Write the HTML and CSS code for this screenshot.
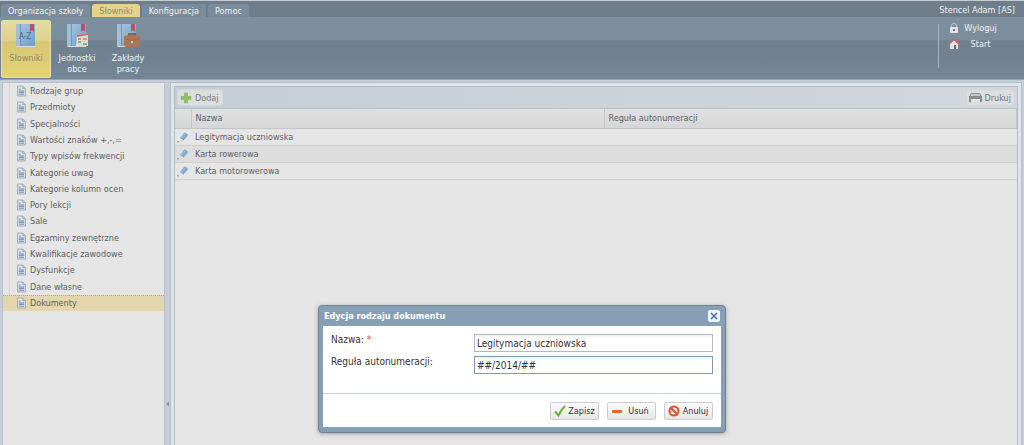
FILE: index.html
```html
<!DOCTYPE html>
<html lang="pl">
<head>
<meta charset="utf-8">
<title>Słowniki</title>
<link rel="stylesheet" href="styles.css">
</head>
<body>
<svg class="defs" aria-hidden="true">
  <defs>
    <linearGradient id="blue" x1="0" y1="0" x2="1" y2="1"><stop offset="0" stop-color="#a9c8e0"/><stop offset="1" stop-color="#6f9cc4"/></linearGradient>
    <symbol id="doc" viewBox="0 0 10 12">
      <path d="M.5.5h6l3 3v8h-9z" fill="#dfe4e9" stroke="#98a6b3"/>
      <path d="M6.500.5v3h3" fill="#bccad8" stroke="#98a6b3"/>
      <path d="M2 4h2M2 6h6M2 7.500h6M2 9.500h6" stroke="#68809a"/>
    </symbol>
    <symbol id="pencil" viewBox="0 0 12 12">
      <path d="M3 7l4-5q1-1 2 0l1.500 1q1 1 0 2L6.500 9.500z" fill="#7da8d2"/>
      <path d="M4.500 7l4-4.500" stroke="#a9c8e4"/>
      <path d="M3 7l3.500 2.500L4 10.500z" fill="#cdd9e4"/>
      <path d="M0 10h2v1.500H0z" fill="#a3a8ad"/>
    </symbol>
    <symbol id="book" viewBox="0 0 24 26">
      <path d="M2 2q0-1 1-1h18v22H3q-1 0-1-1z" fill="url(#blue)"/>
      <path d="M3 1h3v22H3q-1 0-1-1V2q0-1 1-1z" fill="#a3bfd6"/>
      <path d="M6.500 1v22" stroke="#6c95b9"/>
      <path d="M2 23h19v1H3z" fill="#d5dde4"/>
      <path d="M16 1h4v8l-2-2-2 2z" fill="#bd4e68"/>
    </symbol>
  </defs>
</svg>
<header class="top">
  <div class="tabbar">
    <nav class="tabs">
      <a class="tab" href="#">Organizacja szkoły</a>
      <a class="tab tab-on" href="#">Słowniki</a>
      <a class="tab" href="#">Konfiguracja</a>
      <a class="tab" href="#">Pomoc</a>
    </nav>
    <span class="user">Stencel Adam [AS]</span>
  </div>
  <div class="ribbon">
    <div class="tools">
      <button class="tool tool-on"><svg width="24" height="26" viewBox="0 0 24 26"><use href="#book"/><text class="az" x="5" y="16">A-Z</text></svg><span>Słowniki</span></button>
      <button class="tool"><svg width="24" height="26" viewBox="0 0 24 26"><use href="#book"/><path d="M12 12l11-2v13H11z" fill="#dddcd3"/><path d="M12 12l11-2v2l-11 2z" fill="#cc6b66"/><path d="M13 16h3M13 19h3M18 21h4" stroke="#8fae7c" stroke-width="2"/><path d="M18 16h4" stroke="#d98d7e" stroke-width="2"/></svg><span>Jednostki obce</span></button>
      <button class="tool"><svg width="26" height="26" viewBox="0 0 26 26"><use href="#book" width="24" height="26"/><path d="M14 13v-2h6v2" fill="none" stroke="#8d6450" stroke-width="2"/><path d="M9 13q8-2 16 0v9q-1 2-3 2H11q-2 0-2-2z" fill="#a9765a"/><path d="M9 15q8 5 16 0" fill="none" stroke="#98694f"/><circle cx="17" cy="19" r="1" fill="#f1e4d8"/></svg><span>Zakłady pracy</span></button>
    </div>
    <nav class="session">
      <a href="#"><svg width="12" height="12" viewBox="0 0 12 12"><path d="M3.500 6V3.500q0-2 2.500-2t2.500 2V6" fill="none" stroke="#c3cbd2"/><rect x="2" y="5" width="8" height="6" rx="1" fill="#e2e5e8"/><path d="M6 7v2" stroke="#657789" stroke-width="2"/></svg><span>Wyloguj</span></a>
      <a href="#"><svg width="12" height="12" viewBox="0 0 12 12"><path d="M2 6l4-4 4 4v5H2z" fill="#e0e2e3"/><path d="M.5 6.500L6 1.500l5.500 5M9.500 1v3" fill="none" stroke="#c66b74" stroke-width="1.500"/><path d="M6 7h2v4H6z" fill="#7b6670"/></svg><span>Start</span></a>
    </nav>
  </div>
</header>
<main class="work">
  <aside class="side">
    <ul class="tree">
      <li><a href="#"><svg><use href="#doc"/></svg>Rodzaje grup</a></li>
      <li><a href="#"><svg><use href="#doc"/></svg>Przedmioty</a></li>
      <li><a href="#"><svg><use href="#doc"/></svg>Specjalności</a></li>
      <li><a href="#"><svg><use href="#doc"/></svg>Wartości znaków +,-,=</a></li>
      <li><a href="#"><svg><use href="#doc"/></svg>Typy wpisów frekwencji</a></li>
      <li><a href="#"><svg><use href="#doc"/></svg>Kategorie uwag</a></li>
      <li><a href="#"><svg><use href="#doc"/></svg>Kategorie kolumn ocen</a></li>
      <li><a href="#"><svg><use href="#doc"/></svg>Pory lekcji</a></li>
      <li><a href="#"><svg><use href="#doc"/></svg>Sale</a></li>
      <li><a href="#"><svg><use href="#doc"/></svg>Egzaminy zewnętrzne</a></li>
      <li><a href="#"><svg><use href="#doc"/></svg>Kwalifikacje zawodowe</a></li>
      <li><a href="#"><svg><use href="#doc"/></svg>Dysfunkcje</a></li>
      <li><a href="#"><svg><use href="#doc"/></svg>Dane własne</a></li>
      <li class="picked"><a href="#"><svg><use href="#doc"/></svg>Dokumenty</a></li>
    </ul>
  </aside>
  <button class="splitter" aria-label="Zwiń"><svg width="3" height="6" viewBox="0 0 4 6"><path d="M4 0v6L0 3z" fill="#7f8b98"/></svg></button>
  <section class="content">
    <div class="grid">
      <div class="toolbar">
        <button class="mini"><svg width="12" height="12" viewBox="0 0 12 12"><path d="M4.500 1h3v3.500H11v3H7.500V11h-3V7.500H1v-3h3.500z" fill="#8fbe68" stroke="#7cab56" stroke-width=".5"/></svg>Dodaj</button>
        <button class="mini"><svg width="13" height="10" viewBox="0 0 13 10"><path d="M2 .5h9l1 3H1z" fill="#c3c5c8" stroke="#8f949a"/><path d="M0 3h13v6h-2V6H2v3H0z" fill="#868b91"/><path d="M3 6h7v2H3z" fill="#e2e3e4"/></svg>Drukuj</button>
      </div>
      <table>
        <colgroup><col class="c-edit"><col class="c-name"><col></colgroup>
        <thead><tr><th></th><th>Nazwa</th><th>Reguła autonumeracji</th></tr></thead>
        <tbody>
          <tr><td><svg><use href="#pencil"/></svg></td><td>Legitymacja uczniowska</td><td></td></tr>
          <tr><td><svg><use href="#pencil"/></svg></td><td>Karta rowerowa</td><td></td></tr>
          <tr><td><svg><use href="#pencil"/></svg></td><td>Karta motorowerowa</td><td></td></tr>
        </tbody>
      </table>
    </div>
  </section>
</main>
<form class="dialog" role="dialog" aria-labelledby="dlg-title">
  <div class="dlg-head"><h2 id="dlg-title">Edycja rodzaju dokumentu</h2>
    <button type="button" class="close" aria-label="Zamknij"><svg width="12" height="12" viewBox="0 0 12 12"><path d="M3 3l6 6M9 3L3 9" stroke="#4a6db0" stroke-width="1.500"/></svg></button></div>
  <div class="dlg-body">
    <div class="fields">
      <label for="name">Nazwa: <b>*</b></label><input id="name" type="text" value="Legitymacja uczniowska">
      <label for="rule">Reguła autonumeracji:</label><input id="rule" class="focused" type="text" value="##/2014/##">
    </div>
    <div class="actions">
      <button type="button"><svg width="12" height="12" viewBox="0 0 12 12"><path d="M1 6.500L4.500 10.500Q7 5 11 1" fill="none" stroke="#6db33f" stroke-width="2"/></svg><span>Zapisz</span></button>
      <button type="button"><svg width="12" height="12" viewBox="0 0 12 12"><rect x="1" y="5" width="10" height="3" rx="1" fill="#e2672c"/></svg><span>Usuń</span></button>
      <button type="button"><svg width="12" height="12" viewBox="0 0 12 12"><circle cx="6" cy="6" r="4.500" fill="#fbe9e0" stroke="#d65530" stroke-width="2"/><path d="M3 3l6 6" stroke="#d65530" stroke-width="2"/></svg><span>Anuluj</span></button>
    </div>
  </div>
</form>
</body>
</html>
```
FILE: styles.css
```css
* { box-sizing: border-box; }
body {
  margin: 0;
  min-height: 100vh;
  display: flex;
  flex-direction: column;
  background: #c7cfd8;
  color: #5c5e61;
  font: 9px/12px "DejaVu Sans Condensed", Tahoma, sans-serif;
}
button, input { font: inherit; color: inherit; margin: 0; }
button { cursor: pointer; }
a { color: inherit; text-decoration: none; }
svg { flex: none; }
.defs { position: absolute; width: 0; height: 0; }

.top { color: #eef1f3; border-top: 1px solid #c6ccd1; }
.tabbar { display: flex; justify-content: space-between; background: #6e7d8a; height: 16px; padding: 3px 9px 0 1px; }
.tabs { display: flex; gap: 2px; }
.tab { background: #7a8b9b; border-radius: 3px 3px 0 0; padding: 0 7px; line-height: 14px; }
.tab-on { background: #e4d389; color: #8d8a78; }
.user { line-height: 13px; }
.ribbon {
  display: flex;
  justify-content: space-between;
  height: 62px;
  padding: 3px 27px 1px 1px;
  background: linear-gradient(#7d90a0 0, #7a8d9d 23px, #6f808e 24px, #738697 100%);
}
.tools { display: flex; gap: 1px; }
.tool {
  width: 50px;
  display: flex;
  flex-direction: column;
  align-items: center;
  gap: 4px;
  padding: 3px 2px 0;
  border: 0;
  border-radius: 2px;
  background: none;
  line-height: 11px;
}
.tool-on { background: linear-gradient(#e5dba8, #dfd08b 20px, #d9c673 21px, #e3d274); border: 1px solid #e9dfa6; padding-top: 2px; color: #8b8873; }
.az { font-size: 8px; fill: #47698c; }
.session { display: flex; flex-direction: column; gap: 4px; border-left: 1px solid #a8b4be; margin: 4px 0 10px; padding-left: 9px; }
.session a { display: flex; gap: 4px; line-height: 12px; }
.session a:first-child { margin-top: -2px; }
.session span { width: 33px; text-align: center; }

.work { flex: 1; display: flex; padding: 2px 2px 0; background: #c5ced8; border-top: 1px solid #98a6b3; }
.side { width: 163px; background: #e5e5e5; border: 1px solid #b9c2cc; border-bottom: 0; }
.tree { list-style: none; margin: 0; padding: 0; height: 228px; display: grid; grid-auto-rows: 1fr; }
.tree a { display: flex; align-items: center; gap: 4px; height: 100%; padding-left: 14px; }
.tree li { background: linear-gradient(#d5d7d9, #d5d7d9) 6px 0 / 1px 100% no-repeat; }
.tree svg { width: 9px; height: 12px; }
.tree .picked { background: #e4d6ac; border-top: 1px dotted #aaa68f; }
.splitter { width: 5px; border: 0; padding: 280px 0 0; background: #c5ced8; display: flex; flex-direction: column; align-items: center; justify-content: center; }
.content { flex: 1; background: #dfe4e8; border: 1px solid #b5bfca; border-bottom: 0; padding: 3px 3px 0; }
.grid { height: 100%; background: #e5e5e5; border: 1px solid #b3bcc5; border-bottom: 0; }
.toolbar { display: flex; justify-content: space-between; align-items: center; height: 22px; padding: 0 2px; background: linear-gradient(90deg, #c5ced6, #d1d7dc); border-bottom: 1px solid #b8c0c8; }
.mini { display: flex; align-items: center; gap: 3px; height: 17px; padding: 0 3px 0 2px; border: 1px solid #d3d6d8; border-radius: 2px; background: #dcdddd; color: #77797b; }
table { width: 100%; border-collapse: collapse; table-layout: fixed; }
.c-edit { width: 16px; }
.c-name { width: 413px; }
th, td { height: 17px; padding: 0 4px; text-align: left; font-weight: normal; border-bottom: 1px solid #cfcfd0; line-height: 12px; }
th { height: 19px; background: linear-gradient(#e0e0e0, #d5d6d7); border-right: 1px solid #c4c6c8; border-bottom-color: #c2c4c6; }
td:first-child { padding: 0 0 0 2px; }
td svg { display: block; width: 12px; height: 12px; }
tbody tr:nth-child(even) { background: #dddddd; }

.dialog {
  position: absolute;
  left: 318px;
  top: 305px;
  width: 408px;
  padding: 0 4px 5px;
  background: #879fb5;
  border: 1px solid #6d8498;
  border-radius: 4px;
  box-shadow: 0 1px 4px #77777799;
  color: #333;
  font-size: 10px;
}
.dlg-head { display: flex; align-items: center; justify-content: space-between; height: 20px; padding: 0 1px; color: #fff; }
.dlg-head h2 { margin: 0; font-size: 9px; }
.close { width: 12px; height: 12px; padding: 0; border: 0; border-radius: 2px; background: #edf3fc; display: flex; }
.dlg-body { background: #fff; }
.fields { display: grid; grid-template-columns: 143px 1fr; row-gap: 4px; padding: 8px 8px 19px; border-bottom: 1px solid #c3cdd4; }
.fields b { color: #e0413c; font-weight: normal; }
.fields input { height: 18px; min-width: 0; padding: 0 2px; border: 1px solid #b5b8c4; border-radius: 0; background: linear-gradient(#f0f1f2, #fff 4px); outline: 0; }
.fields .focused { border-color: #8099b5; }
.actions { display: flex; justify-content: flex-end; gap: 8px; padding: 8px 8px 7px; font-size: 9px; }
.actions button { display: flex; align-items: center; gap: 2px; width: 49px; height: 18px; padding: 0 3px; border: 1px solid #cdcdcd; border-radius: 2px; background: linear-gradient(#fbfbfb, #e6e6e6); }
.actions span { flex: 1; text-align: center; }
```
